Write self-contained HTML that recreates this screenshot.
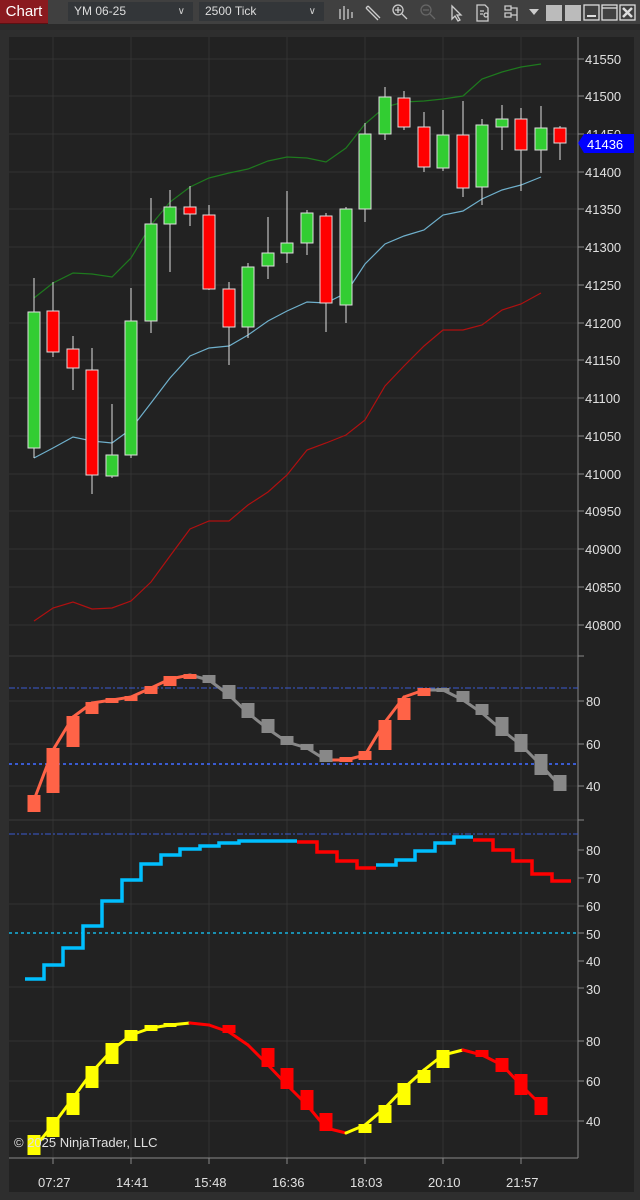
<!DOCTYPE html>
<html><head><meta charset="utf-8"><style>
body{margin:0;width:640px;height:1200px;background:#2e2e2e;overflow:hidden;font-family:"Liberation Sans",sans-serif}
#tb{position:absolute;left:0;top:0;width:640px;height:24px;background:#404040}
#chart{position:absolute;left:0;top:0;width:48px;height:23px;background:#8a1a1f;color:#fff;font-size:15px;line-height:23px;text-align:center;border-bottom:1px solid #5a0f12}
.dd{position:absolute;top:2px;height:19px;background:#333639;color:#ddd;font-size:12px;line-height:19px;padding-left:6px;box-sizing:border-box}
.dd span{position:absolute;right:8px;top:0;font-size:10px;color:#ccc}
svg{position:absolute;left:0;top:0}
</style></head><body>
<div id="tb"></div>
<div id="chart">Chart</div>
<div class="dd" style="left:68px;width:125px">YM 06-25<span>&#x2228;</span></div>
<div class="dd" style="left:199px;width:125px">2500 Tick<span>&#x2228;</span></div>
<svg width="640" height="1200" id="s">
<g stroke="#ccc" fill="none" stroke-width="1.3">
<path d="M340 9v10M344 6v14M348 9v10M352 12v6"/>
<path d="M366 8l12 12M368 6l12 12M366 8l2-2"/>
<circle cx="398" cy="10" r="5"/><path d="M402 14l5 5M395 10h6M398 7v6"/>
<g stroke="#666"><circle cx="426" cy="10" r="5"/><path d="M430 14l5 5M423 10h6"/></g>
<path d="M452 6v13l3-3 3 5 2-1-3-5h4z"/>
<path d="M477 5h8l3 3v13h-11z M480 11h4M480 14h3"/><circle cx="486" cy="15" r="2"/>
<path d="M505 6h6v4h-6zM505 13h6v4h-6zM511 8h6v13M511 15h6"/>
</g>
<path d="M529 9h10l-5 6z" fill="#ccc"/>
<rect x="546" y="5" width="16" height="16" fill="#bbb"/>
<rect x="565" y="5" width="16" height="16" fill="#bbb"/>
<g stroke="#ddd" fill="none" stroke-width="1.3">
<rect x="584" y="5" width="15" height="15"/><path d="M587 16h9" stroke-width="2"/>
<rect x="602" y="5" width="15" height="15"/><path d="M602 8h15"/>
<rect x="620" y="5" width="15" height="15"/><path d="M623 8l9 9M632 8l-9 9" stroke-width="2.5"/>
</g>
<rect x="0" y="24" width="640" height="6" fill="#2a2a2a"/>
<rect x="9" y="37" width="625" height="1155" fill="#222"/>
<g stroke="#333" stroke-width="1" id="grid"></g>
<g id="plots"></g>
<g fill="#e0e0e0" font-size="13" font-family="Liberation Sans, sans-serif">
<text x="585" y="64">41550</text><text x="585" y="101">41500</text><text x="585" y="139">41450</text><text x="585" y="177">41400</text><text x="585" y="214">41350</text><text x="585" y="252">41300</text><text x="585" y="290">41250</text><text x="585" y="328">41200</text><text x="585" y="365">41150</text><text x="585" y="403">41100</text><text x="585" y="441">41050</text><text x="585" y="479">41000</text><text x="585" y="516">40950</text><text x="585" y="554">40900</text><text x="585" y="592">40850</text><text x="585" y="630">40800</text>
<text x="586" y="706">80</text><text x="586" y="749">60</text><text x="586" y="791">40</text>
<text x="586" y="855">80</text><text x="586" y="883">70</text><text x="586" y="911">60</text><text x="586" y="939">50</text><text x="586" y="966">40</text><text x="586" y="994">30</text>
<text x="586" y="1046">80</text><text x="586" y="1086">60</text><text x="586" y="1126">40</text>
<text x="38" y="1187">07:27</text><text x="116" y="1187">14:41</text><text x="194" y="1187">15:48</text><text x="272" y="1187">16:36</text><text x="350" y="1187">18:03</text><text x="428" y="1187">20:10</text><text x="506" y="1187">21:57</text>
</g>
<path d="M578 143l6-9h50v19h-50z" fill="#0000ff"/>
<text x="587" y="149" fill="#fff" font-size="13" font-family="Liberation Sans, sans-serif">41436</text>
<g id="top"></g>
<text x="14" y="1147" fill="#e0e0e0" font-size="13" font-family="Liberation Sans, sans-serif">© 2025 NinjaTrader, LLC</text>
</svg>
<script>
var NS="http://www.w3.org/2000/svg",G=document.getElementById('grid'),P=document.getElementById('plots');
function el(p,t,a){var e=document.createElementNS(NS,t);for(var k in a)e.setAttribute(k,a[k]);p.appendChild(e);return e}
var xs=[53,131,209,287,365,443,521];
xs.forEach(function(x){el(G,'line',{x1:x,y1:37,x2:x,y2:1158})});
[59,96,134,172,209,247,285,323,360,398,436,474,511,549,587,625,701,744,786,904,987,1041,1081,1121].forEach(function(y){el(G,'line',{x1:9,y1:y,x2:578,y2:y})});
[656,820].forEach(function(y){el(G,'line',{x1:9,y1:y,x2:578,y2:y,stroke:'#3a3a3a'})});
el(G,'line',{x1:578,y1:37,x2:578,y2:1158,stroke:'#888'});
el(G,'line',{x1:9,y1:1158,x2:578,y2:1158,stroke:'#888'});
[59,96,134,172,209,247,285,323,360,398,436,474,511,549,587,625,656,701,744,786,820,850,878,906,933,961,988,1041,1081,1121].forEach(function(y){el(G,'line',{x1:578,y1:y,x2:584,y2:y,stroke:'#888'})});
xs.forEach(function(x){el(G,'line',{x1:x,y1:1158,x2:x,y2:1164,stroke:'#888'})});
function pl(pts,c,w,extra){var a={points:pts.map(function(p){return p.join(',')}).join(' '),fill:'none',stroke:c,'stroke-width':w};for(var k in extra)a[k]=extra[k];el(P,'polyline',a)}
var X=[34,53,73,92,112,131,151,170,190,209,229,248,268,287,307,326,346,365,385,404,424,443,463,482,502,521,541,560];
var up=[298,283,273,274,277,258,225,202,187,178,173,169,161,157,158,162,148,124,107,102,101,99,96,79,72,67,64];
var md=[458,448,437,441,443,429,403,378,356,348,346,335,321,311,302,303,293,264,244,236,230,215,211,199,190,185,177];
var lo=[621,608,602,609,608,601,582,556,529,521,521,505,492,475,450,443,435,420,386,366,346,330,330,325,310,304,293];
pl(up.map(function(y,i){return[X[i],y]}),'#1e7a1e',1.2);
pl(md.map(function(y,i){return[X[i],y]}),'#6fb0cc',1.2);
pl(lo.map(function(y,i){return[X[i],y]}),'#b01010',1.2);
var C=[[312,448,278,458,1],[311,352,282,357,0],[349,368,336,390,0],[370,475,348,494,0],[455,476,404,478,1],[321,455,288,458,1],[224,321,198,333,1],[207,224,190,272,1],[207,214,186,226,0],[215,289,205,290,0],[289,327,282,365,0],[267,327,263,338,1],[253,266,217,279,1],[243,253,191,263,1],[213,243,210,255,1],[216,303,213,332,0],[209,305,207,323,1],[134,209,123,222,1],[97,134,87,140,1],[98,127,91,130,0],[127,167,112,172,0],[135,168,110,171,1],[135,188,101,197,0],[125,187,119,205,1],[119,127,105,150,1],[119,150,108,191,0],[128,150,106,173,1],[128,143,126,160,0]];
C.forEach(function(c,i){var x=X[i];el(P,'line',{x1:x,y1:c[2],x2:x,y2:c[3],stroke:'#ddd','stroke-width':1});el(P,'rect',{x:x-6,y:c[0],width:12,height:c[1]-c[0],fill:c[4]?'#32cd32':'#ff0000',stroke:'#ddd','stroke-width':1})});
el(P,'line',{x1:9,y1:688,x2:578,y2:688,stroke:'#3a5bd0','stroke-width':1,'stroke-dasharray':'6,2,2,2'});
el(P,'line',{x1:9,y1:764,x2:578,y2:764,stroke:'#3a5bd0','stroke-width':2,'stroke-dasharray':'3,3'});
var L2=[800,750,717,703,700,697,688,679,675,680,695,713,729,742,748,760,760,755,722,697,690,690,700,713,730,745,765,786];
var g2c='#888',o2c='#ff6347';
function col2(i){return (i<=8||(i>=16&&i<=20))?o2c:g2c}
for(var i=0;i<27;i++)pl([[X[i],L2[i]],[X[i+1],L2[i+1]]],col2(i+1),3,{'stroke-linecap':'round'});
var B2=[[795,812],[748,793],[716,747],[702,714],[698,703],[696,701],[686,694],[676,686],[674,679],[675,683],[685,699],[703,718],[719,733],[736,745],[744,750],[750,762],[757,762],[751,760],[720,750],[698,720],[688,696],[688,692],[691,702],[704,715],[717,736],[734,752],[754,775],[775,791]];
B2.forEach(function(b,i){el(P,'rect',{x:X[i]-6.5,y:b[0],width:13,height:b[1]-b[0],fill:col2(i)})});
el(P,'line',{x1:9,y1:834,x2:578,y2:834,stroke:'#3a5bd0','stroke-width':1,'stroke-dasharray':'6,2,2,2'});
el(P,'line',{x1:9,y1:933,x2:578,y2:933,stroke:'#1a8fb0','stroke-width':2,'stroke-dasharray':'3,3'});
var S=[[25,979],[44,965],[63,948],[83,926],[102,901],[122,880],[141,864],[161,855],[180,849],[200,846],[219,843],[239,841]];
function step(arr,end,c){var p=[];arr.forEach(function(s,i){p.push([s[0],s[1]]);var nx=i<arr.length-1?arr[i+1][0]:end;p.push([nx,s[1]])});pl(p,c,3.5,{'stroke-linejoin':'miter'})}
step(S,297,'#00bfff');
step([[297,842],[317,852],[337,861],[357,868]],376,'#ff0000');
step([[376,865],[396,860],[415,851],[435,843],[454,837]],473,'#00bfff');
step([[473,840],[493,850],[513,861],[532,874],[552,881]],571,'#ff0000');
var L4=[1148,1125,1098,1072,1050,1035,1028,1025,1023,1025,1032,1045,1065,1085,1105,1128,1133,1125,1108,1088,1070,1055,1050,1055,1065,1085,1105];
function col4(i){return (i<=8||(i>=17&&i<=22))?'#ffff00':'#ff0000'}
for(var i=0;i<26;i++)pl([[X[i],L4[i]],[X[i+1],L4[i+1]]],col4(i+1),3,{'stroke-linecap':'round'});
var B4={0:[1135,1155],1:[1117,1137],2:[1093,1115],3:[1066,1088],4:[1043,1064],5:[1030,1041],6:[1025,1031],7:[1023,1027],10:[1025,1033],12:[1048,1067],13:[1068,1089],14:[1090,1110],15:[1113,1131],17:[1124,1133],18:[1105,1123],19:[1083,1105],20:[1070,1083],21:[1050,1068],23:[1050,1057],24:[1058,1072],25:[1074,1095],26:[1097,1115]};
for(var k in B4){var b=B4[k];el(P,'rect',{x:X[k]-6.5,y:b[0],width:13,height:b[1]-b[0],fill:col4(+k)})}
</script>
</body></html>
